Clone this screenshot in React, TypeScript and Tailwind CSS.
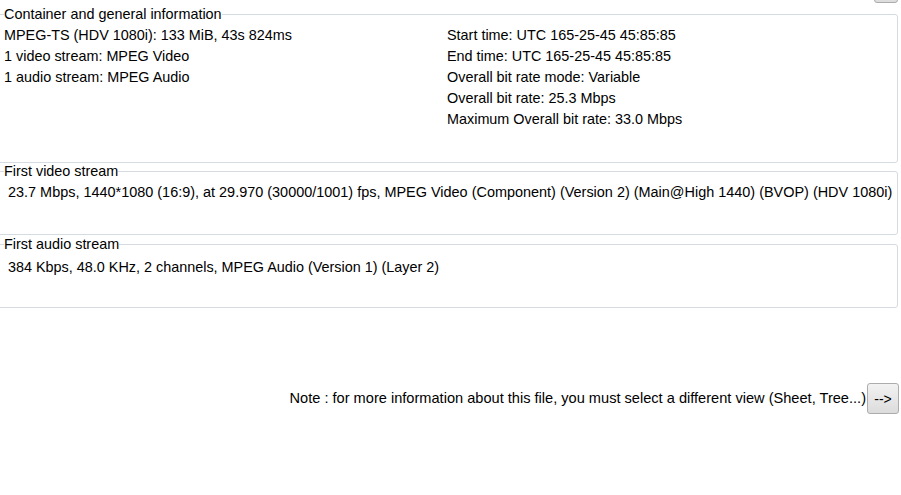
const general = [
  "MPEG-TS (HDV 1080i): 133 MiB, 43s 824ms",
  "1 video stream: MPEG Video",
  "1 audio stream: MPEG Audio",
];

const timing = [
  "Start time: UTC 165-25-45 45:85:85",
  "End time: UTC 165-25-45 45:85:85",
  "Overall bit rate mode: Variable",
  "Overall bit rate: 25.3 Mbps",
  "Maximum Overall bit rate: 33.0 Mbps",
];

function GroupBox({
  title,
  className,
  children,
}: {
  title: string;
  className: string;
  children: React.ReactNode;
}) {
  return (
    <fieldset
      className={`-ml-[6px] rounded-[3px] border border-[#d5dbe3] pl-[9px] pr-1 ${className}`}
    >
      <legend className="px-0 leading-[16px]">{title}</legend>
      {children}
    </fieldset>
  );
}

export default function App() {
  return (
    <main
      className="min-h-[495px] overflow-hidden bg-white text-[14.4px] text-black"
      style={{ fontFamily: '"Liberation Sans", Arial, sans-serif' }}
    >
      <div className="flex justify-end pr-[3px]">
        <button className="-mt-[17px] h-[20px] w-[24px] rounded-[3px] border border-[#acacac] bg-gradient-to-b from-[#f2f2f2] to-[#dcdcdc]" />
      </div>

      <div className="mt-[3px] pr-[3px]">
        <GroupBox title="Container and general information" className="h-[157px]">
          <div className="mt-[3px] grid grid-cols-[443px_1fr] leading-[21px]">
            <div>
              {general.map((line) => (
                <div key={line}>{line}</div>
              ))}
            </div>
            <div>
              {timing.map((line) => (
                <div key={line}>{line}</div>
              ))}
            </div>
          </div>
        </GroupBox>

        <GroupBox title="First video stream" className="h-[72px]">
          <div className="mt-[3px] whitespace-nowrap pl-1 text-[14.45px] leading-[21px]">
            23.7 Mbps, 1440*1080 (16:9), at 29.970 (30000/1001) fps, MPEG Video
            (Component) (Version 2) (Main@High 1440) (BVOP) (HDV 1080i)
          </div>
        </GroupBox>

        <GroupBox title="First audio stream" className="mt-[1px] h-[72px]">
          <div className="mt-[5px] pl-1 leading-[21px]">
            384 Kbps, 48.0 KHz, 2 channels, MPEG Audio (Version 1) (Layer 2)
          </div>
        </GroupBox>
      </div>

      <div className="mt-[75px] flex items-center justify-end pr-[2px]">
        <span className="mr-[1px] text-[14.6px]">
          Note : for more information about this file, you must select a
          different view (Sheet, Tree...)
        </span>
        <button className="h-[31px] w-[32px] rounded-[3px] border border-[#acacac] bg-gradient-to-b from-[#f2f2f2] to-[#dcdcdc] text-[14px] leading-none">
          --&gt;
        </button>
      </div>
    </main>
  );
}
